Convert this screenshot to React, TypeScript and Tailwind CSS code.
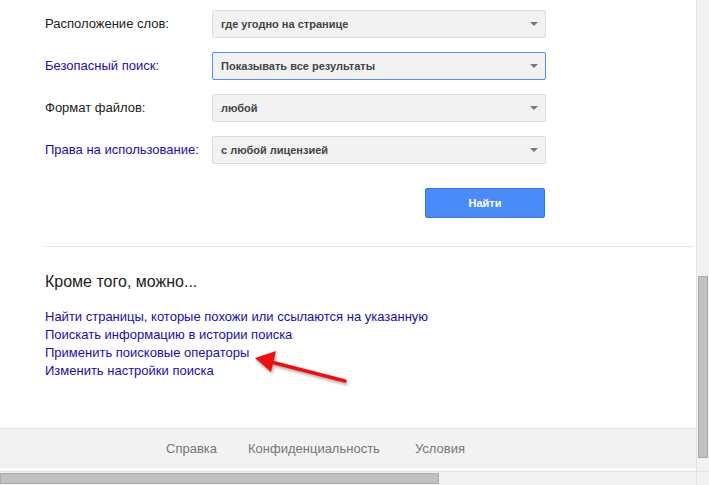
import React from "react";

const rows = [
  { label: "Расположение слов:", value: "где угодно на странице", link: false, focus: false },
  { label: "Безопасный поиск:", value: "Показывать все результаты", link: true, focus: true },
  { label: "Формат файлов:", value: "любой", link: false, focus: false },
  { label: "Права на использование:", value: "с любой лицензией", link: true, focus: false },
];

const links = [
  "Найти страницы, которые похожи или ссылаются на указанную",
  "Поискать информацию в истории поиска",
  "Применить поисковые операторы",
  "Изменить настройки поиска",
];

function Select({ value, focus }: { value: string; focus: boolean }) {
  return (
    <div
      className={`flex h-[28px] w-[334px] items-center justify-between rounded-[2px] border bg-[#f2f2f2] pl-[8px] pr-[7px] ${
        focus ? "border-[#4d90fe]" : "border-[#dcdcdc]"
      }`}
    >
      <span className="text-[11px] font-bold text-[#444]">{value}</span>
      <span className="h-0 w-0 border-x-[4px] border-t-[4px] border-x-transparent border-t-[#777]" />
    </div>
  );
}

export default function App() {
  return (
    <div className="flex h-[485px] w-[709px] flex-col overflow-hidden bg-white font-['Liberation_Sans',Arial,sans-serif]">
      <div className="flex min-h-0 flex-1">
        <div className="flex w-[696px] flex-col">
          <div className="flex flex-col gap-[14px] pl-[45px] pt-[10px]">
            {rows.map((r) => (
              <div key={r.label} className="flex items-center">
                <span className={`w-[167px] text-[13px] ${r.link ? "text-[#1a0dab]" : "text-[#222]"}`}>{r.label}</span>
                <Select value={r.value} focus={r.focus} />
              </div>
            ))}
          </div>
          <div className="ml-[425px] mt-[24px] flex h-[30px] w-[120px] items-center justify-center rounded-[2px] border border-[#3079ed] bg-[#4a8cf7] text-[11px] font-bold text-white">
            Найти
          </div>
          <div className="ml-[45px] mr-[3px] mt-[28px] h-px bg-[#e5e5e5]" />
          <div className="mt-[25px] pl-[45px] text-[16px] leading-[20px] text-[#222]">Кроме того, можно...</div>
          <div className="relative mt-[16px] flex flex-col pl-[45px]">
            {links.map((l) => (
              <span key={l} className="text-[13px] leading-[18px] text-[#1a0dab]">
                {l}
              </span>
            ))}
            <svg className="absolute left-[245px] top-[42px]" width="110" height="40" viewBox="0 0 110 40">
              <defs>
                <filter id="sh" x="-20%" y="-50%" width="140%" height="200%">
                  <feDropShadow dx="1" dy="2" stdDeviation="1.5" floodColor="#000" floodOpacity="0.35" />
                </filter>
              </defs>
              <g filter="url(#sh)">
                <line x1="100" y1="31" x2="22" y2="11" stroke="#f01010" strokeWidth="3.5" strokeLinecap="round" />
                <polygon points="10,8 31,1 26,22" fill="#f01010" />
              </g>
            </svg>
          </div>
          <div className="flex-1" />
          <div className="mb-[3px] flex h-[40px] items-center justify-start border-t border-[#e4e4e4] bg-[#f2f2f2] pl-[166px] text-[13px] text-[#777]">
            <span>Справка</span>
            <span className="ml-[31px]">Конфиденциальность</span>
            <span className="ml-[35px]">Условия</span>
          </div>
        </div>
        <div className="flex w-[13px] flex-col border-l border-[#e2e2e2] bg-[#f1f1f1] pb-[13px] pt-[276px]">
          <div className="mx-[1px] flex-1 border border-[#aaa] bg-[#c1c1c1]" />
        </div>
      </div>
      <div className="flex h-[14px] border-t border-[#e2e2e2] bg-[#f1f1f1]">
        <div className="my-[1px] w-[439px] border border-[#aaa] bg-[#c1c1c1]" />
        <div className="flex-1" />
        <div className="w-[13px] border-l border-[#e2e2e2]" />
      </div>
    </div>
  );
}
